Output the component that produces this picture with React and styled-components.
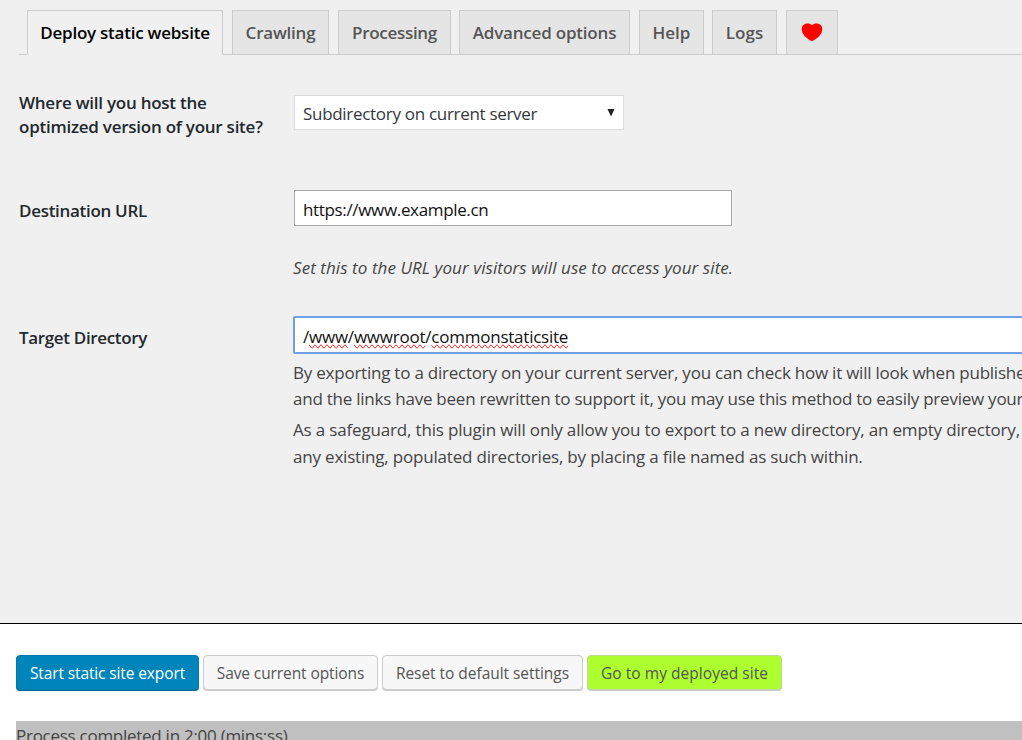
import React from "react";
import styled, { createGlobalStyle } from "styled-components";

const GlobalStyle = createGlobalStyle`
  * { box-sizing: border-box; }
  html, body { margin: 0; height: 740px; overflow: hidden; }
  body {
    background: #fff;
    color: #444;
    font-family: "Open Sans", "Noto Sans", sans-serif;
    font-size: 17px;
  }
`;

const Page = styled.div`
  display: flex;
  flex-direction: column;
  width: 1022px;
  height: 740px;
  overflow: hidden;
`;

const Options = styled.main`
  height: 624px;
  flex: none;
  padding: 10px 0 0 19px;
  background: #f0f0f0;
  border-bottom: 1px solid #000;
  overflow: hidden;
`;

const TabBar = styled.nav`
  display: flex;
  height: 45px;
  padding-left: 8px;
  border-bottom: 1px solid #ccc;
`;

const Tab = styled.a`
  display: flex;
  align-items: center;
  justify-content: center;
  flex: none;
  width: ${(p) => p.$width}px;
  height: ${(p) => (p.$active ? 45 : 44)}px;
  margin-right: ${(p) => p.$gap ?? 9}px;
  border: 1px solid #ccc;
  border-bottom: ${(p) => (p.$active ? "1px solid #f0f0f0" : "none")};
  background: ${(p) => (p.$active ? "#f0f0f0" : "#e5e5e5")};
  color: ${(p) => (p.$active ? "#000" : "#555")};
  font-weight: 600;
  letter-spacing: ${(p) => p.$spacing ?? 0}px;
  white-space: nowrap;
`;

const Row = styled.section`
  display: grid;
  grid-template-columns: 274px 1fr;
  height: ${(p) => p.$height}px;
`;

const Label = styled.label`
  padding-top: ${(p) => p.$top}px;
  color: #23282d;
  font-weight: 600;
  line-height: 24px;
  letter-spacing: ${(p) => p.$spacing ?? 0}px;
  white-space: nowrap;
`;

const Control = styled.div`
  padding-top: ${(p) => p.$top}px;
  min-width: 0;
`;

const Select = styled.div`
  display: flex;
  align-items: center;
  justify-content: space-between;
  width: 330px;
  height: 35px;
  margin-left: 1px;
  padding: 1px 8px 0;
  border: 1px solid #ddd;
  background: #fff;
  color: #32373c;
  letter-spacing: ${(p) => p.$spacing ?? 0}px;
`;

const Field = styled.div`
  width: 438px;
  height: 36px;
  margin-left: 1px;
  padding: 2px 8px 0;
  border: 1px solid #aaa;
  background: #fff;
  color: #111;
  line-height: 34px;
  letter-spacing: ${(p) => p.$spacing ?? 0}px;
`;

const FocusedField = styled(Field)`
  width: 900px;
  height: 38px;
  margin-left: 0;
  border: 2px solid #6f9fe6;
  border-radius: 2px;
`;

const Misspelled = styled.span`
  text-decoration-line: spelling-error;
`;

const Hint = styled.p`
  margin: 30px 0 0;
  font-style: italic;
  line-height: 24px;
  letter-spacing: ${(p) => p.$spacing ?? 0}px;
  white-space: nowrap;
`;

const Paragraph = styled.p`
  margin: ${(p) => p.$top}px 0 0;
  line-height: ${(p) => p.$leading}px;
  white-space: nowrap;
`;

const Line = styled.span`
  display: block;
  letter-spacing: ${(p) => p.$spacing ?? 0}px;
`;

const Footer = styled.footer`
  flex: 1;
  padding: 31px 0 0 16px;
  background: #fefefe;
`;

const Actions = styled.div`
  display: flex;
  gap: 4px;
  height: 36px;
`;

const variants = {
  primary: { bg: "#0085ba", fg: "#fff", border: "#0079ad", shadow: "#006799" },
  plain: { bg: "#f7f7f7", fg: "#555", border: "#ccc", shadow: "#ccc" },
  success: { bg: "#adff2f", fg: "#555", border: "#c3d79c", shadow: "#ccc" },
};

const Button = styled.button`
  width: ${(p) => p.$width}px;
  height: 35px;
  padding: 1px 0 0;
  border: 1px solid ${(p) => variants[p.$variant].border};
  border-radius: 4px;
  box-shadow: 0 1px 0 ${(p) => variants[p.$variant].shadow};
  background: ${(p) => variants[p.$variant].bg};
  color: ${(p) => variants[p.$variant].fg};
  font-family: inherit;
  font-size: 15.5px;
  letter-spacing: ${(p) => p.$spacing ?? 0}px;
  white-space: nowrap;
`;

const Progress = styled.div`
  height: 40px;
  margin-top: 30px;
  background: #c0c0c0;
  line-height: 29px;
  letter-spacing: ${(p) => p.$spacing ?? 0}px;
`;

const Heart = () => (
  <svg width="22" height="19" viewBox="0 0 22 19" aria-hidden="true">
    <path
      d="M11 2.2C9.500.4 6.300.2 4 .900 1.500 1.800.4 4.200.8 7.200c.7 4.700 5.400 8.700 10.200 11.100C15.800 15.900 20.500 11.900 21.200 7.200c.4-3-.7-5.400-3.200-6.300C15.700.2 12.500.4 11 2.200Z"
      fill="#f00"
    />
  </svg>
);

const Arrow = () => (
  <svg width="8" height="8" viewBox="0 0 8 8" aria-hidden="true">
    <path d="M.5 0h7L4 7.500Z" fill="#222" />
  </svg>
);

export default function App() {
  return (
    <Page>
      <GlobalStyle />
      <Options>
        <TabBar>
          <Tab $active $width={196} $spacing={-0.24}>Deploy static website</Tab>
          <Tab $width={97} $spacing={-0.22}>Crawling</Tab>
          <Tab $width={113} $gap={8} $spacing={-0.3}>Processing</Tab>
          <Tab $width={171} $spacing={-0.2}>Advanced options</Tab>
          <Tab $width={65} $gap={8}>Help</Tab>
          <Tab $width={65}>Logs</Tab>
          <Tab $width={52}><Heart /></Tab>
        </TabBar>

        <Row $height={135}>
          <Label $top={36} $spacing={-0.25}>
            Where will you host the
            <br />
            optimized version of your site?
          </Label>
          <Control $top={40}>
            <Select $spacing={-0.3}>
              Subdirectory on current server
              <Arrow />
            </Select>
          </Control>
        </Row>

        <Row $height={126}>
          <Label $top={9} $spacing={-0.3}>Destination URL</Label>
          <Control $top={0}>
            <Field $spacing={-0.34}>https://www.example.cn</Field>
            <Hint $spacing={0.07}>Set this to the URL your visitors will use to access your site.</Hint>
          </Control>
        </Row>

        <Row $height={200}>
          <Label $top={10} $spacing={-0.34}>Target Directory</Label>
          <Control $top={0}>
            <FocusedField $spacing={-0.23}>
              /<Misspelled>www</Misspelled>/<Misspelled>wwwroot</Misspelled>/
              <Misspelled>commonstaticsite</Misspelled>
            </FocusedField>
            <Paragraph $top={6} $leading={26}>
              <Line $spacing={-0.23}>By exporting to a directory on your current server, you can check how it will look when published.</Line>
              <Line $spacing={-0.24}>and the links have been rewritten to support it, you may use this method to easily preview your</Line>
            </Paragraph>
            <Paragraph $top={4} $leading={27}>
              <Line $spacing={-0.17}>As a safeguard, this plugin will only allow you to export to a new directory, an empty directory,</Line>
              <Line $spacing={-0.19}>any existing, populated directories, by placing a file named as such within.</Line>
            </Paragraph>
          </Control>
        </Row>
      </Options>

      <Footer>
        <Actions>
          <Button $variant="primary" $width={183} $spacing={-0.12}>Start static site export</Button>
          <Button $variant="plain" $width={175} $spacing={-0.1}>Save current options</Button>
          <Button $variant="plain" $width={201} $spacing={-0.04}>Reset to default settings</Button>
          <Button $variant="success" $width={195} $spacing={0.04}>Go to my deployed site</Button>
        </Actions>
        <Progress $spacing={-0.27}>Process completed in 2:00 (mins:ss)</Progress>
      </Footer>
    </Page>
  );
}
